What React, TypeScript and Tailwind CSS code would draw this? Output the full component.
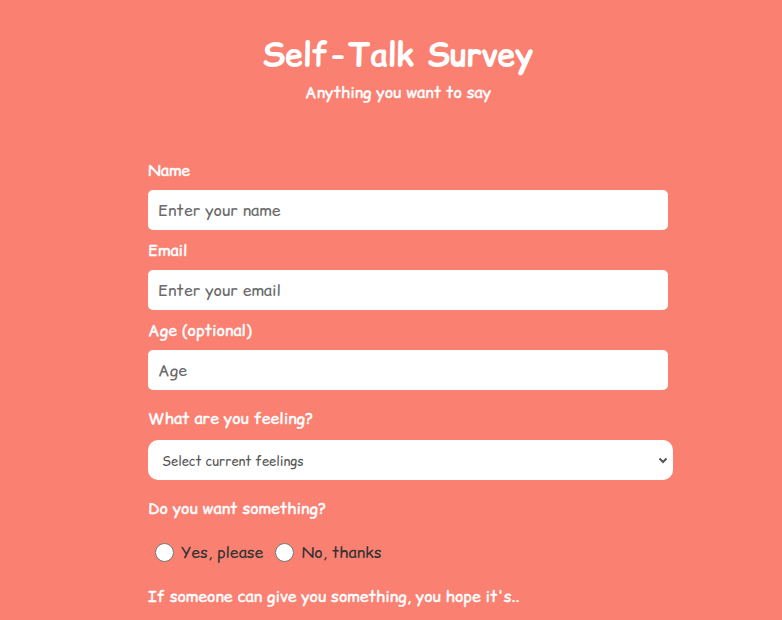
const font = { fontFamily: '"Comic Relief", "Comic Sans MS", "Comic Neue", cursive' };

function Field({ label, placeholder, first }: { label: string; placeholder: string; first?: boolean }) {
  return (
    <>
      <label className={`${first ? '' : 'mt-[9px]'} text-[16px] leading-[22px] [-webkit-text-stroke:0.35px_white]`}>{label}</label>
      <input
        className="mt-[9px] h-[40px] w-[520px] rounded-[5px] bg-white px-[10px] text-[16px] text-[#333] placeholder:text-[#6b6b6b] outline-none"
        placeholder={placeholder}
        style={font}
      />
    </>
  );
}

function Radio({ label }: { label: string }) {
  return (
    <span className="flex items-center">
      <span className="h-[19px] w-[19px] rounded-full border-[1.5px] border-[#767676] bg-white" />
      <span className="ml-[7px]">{label}</span>
    </span>
  );
}

export default function App() {
  return (
    <div className="min-h-[620px] w-full bg-[#fa8072] text-white" style={font}>
      <header className="pt-[33px] text-center">
        <h1 className="text-[32px] font-bold leading-[44px] ml-[14px]">Self-Talk Survey</h1>
        <p className="text-[16px] leading-[22px] mt-[4px] ml-[14px] [-webkit-text-stroke:0.35px_white]">Anything you want to say</p>
      </header>
      <form className="pl-[148px] pt-[56px]">
        <div className="flex flex-col">
          <Field first label="Name" placeholder="Enter your name" />
          <Field label="Email" placeholder="Enter your email" />
          <Field label="Age (optional)" placeholder="Age" />
          <label className="mt-[17px] text-[16px] leading-[22px] [-webkit-text-stroke:0.35px_white]">What are you feeling?</label>
          <div className="relative mt-[11px] h-[40px] w-[525px] rounded-[10px] bg-white">
            <span className="absolute left-[14px] top-[12px] text-[13px] leading-[18px] text-[#555]">Select current feelings</span>
            <svg className="absolute right-[5px] top-[17px]" width="10" height="7" viewBox="0 0 10 7">
              <path d="M1.5 1.5 L5 5 L8.5 1.5" stroke="#555" strokeWidth="2" fill="none" />
            </svg>
          </div>
          <label className="mt-[17px] text-[16px] leading-[22px] [-webkit-text-stroke:0.35px_white]">Do you want something?</label>
          <div className="mt-[22px] flex items-center gap-[12px] pl-[7px] text-[16px] text-[#333] leading-[22px]">
            <Radio label="Yes, please" />
            <Radio label="No, thanks" />
          </div>
          <label className="mt-[22px] text-[16px] leading-[22px] [-webkit-text-stroke:0.35px_white]">If someone can give you something, you hope it's..</label>
        </div>
      </form>
    </div>
  );
}
